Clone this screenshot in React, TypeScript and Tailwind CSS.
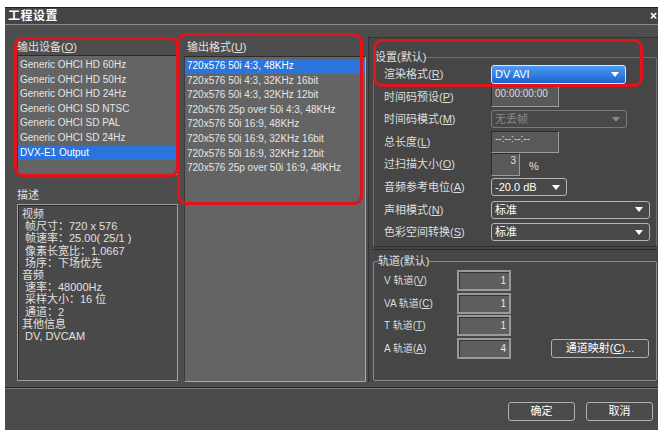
import React from "react";

const font = "font-['Liberation_Sans','Noto_Sans_CJK_SC',sans-serif]";

const devices = [
  "Generic OHCI HD 60Hz",
  "Generic OHCI HD 50Hz",
  "Generic OHCI HD 24Hz",
  "Generic OHCI SD NTSC",
  "Generic OHCI SD PAL",
  "Generic OHCI SD 24Hz",
  "DVX-E1 Output",
];

const formats = [
  "720x576 50i 4:3, 48KHz",
  "720x576 50i 4:3, 32KHz 16bit",
  "720x576 50i 4:3, 32KHz 12bit",
  "720x576 25p over 50i 4:3, 48KHz",
  "720x576 50i 16:9, 48KHz",
  "720x576 50i 16:9, 32KHz 16bit",
  "720x576 50i 16:9, 32KHz 12bit",
  "720x576 25p over 50i 16:9, 48KHz",
];

const description: Array<[string, boolean]> = [
  ["视频", false],
  ["帧尺寸：720 x 576", true],
  ["帧速率：25.00( 25/1 )", true],
  ["像素长宽比：1.0667", true],
  ["场序：下场优先", true],
  ["音频", false],
  ["速率：48000Hz", true],
  ["采样大小：16 位", true],
  ["通道：2", true],
  ["其他信息", false],
  ["DV, DVCAM", true],
];

function Label({ text, mnemonic, suffix = "" }: { text: string; mnemonic: string; suffix?: string }) {
  return (
    <span>
      {text}(<u>{mnemonic}</u>){suffix}
    </span>
  );
}

function Caret({ color = "text-white" }: { color?: string }) {
  return (
    <svg width="8" height="5" viewBox="0 0 8 5" className={color}>
      <path d="M0 0 H8 L4 5 Z" fill="currentColor" />
    </svg>
  );
}

function ListBox({
  items,
  selected,
  className,
}: {
  items: string[];
  selected: number;
  className: string;
}) {
  return (
    <div
      className={`bg-[#646464] border border-t-[#2b2b2b] border-l-[#3c3c3c] border-r-[#a8a8a8] border-b-[#a8a8a8] pt-[2px] ${className}`}
    >
      {items.map((item, i) => (
        <div
          key={item}
          className={`h-[14.6px] leading-[14.6px] pl-[2px] text-[10px] whitespace-nowrap ${
            i === selected ? "bg-[#2a74dc] text-white" : "text-[#e4e4e4]"
          }`}
        >
          {item}
        </div>
      ))}
    </div>
  );
}

function Dropdown({
  value,
  width,
  disabled = false,
}: {
  value: string;
  width: string;
  disabled?: boolean;
}) {
  return (
    <div
      className={`${width} shrink-0 h-[18px] flex items-center justify-between pl-[3px] pr-[6px] rounded-[3px] border bg-[#484848] ${
        disabled ? "border-[#7a7a7a] text-[#8a8a8a]" : "border-[#b4b4b4] text-white"
      }`}
    >
      <span className="text-[11px]">{value}</span>
      <Caret color={disabled ? "text-[#8a8a8a]" : "text-white"} />
    </div>
  );
}

function Sunken({ value, width, height, align = "left" }: { value: string; width: string; height: string; align?: "left" | "right" }) {
  return (
    <div
      className={`${width} ${height} shrink-0 bg-[#595959] border border-t-[#2a2a2a] border-l-[#2a2a2a] border-r-[#9c9c9c] border-b-[#9c9c9c] px-[3px] pt-[1px] text-[10px] leading-[12px] text-[#dcdcdc] ${
        align === "right" ? "text-right" : ""
      }`}
    >
      {value}
    </div>
  );
}

function TrackInput({ value }: { value: string }) {
  return (
    <div className="w-[54px] h-[21px] shrink-0 bg-[#5e5e5e] border-2 border-[#9a9a9a] shadow-[inset_1px_1px_0_#333] flex items-center justify-end pr-[3px] text-[10px] text-[#e8e8e8]">
      {value}
    </div>
  );
}

function Row({ label, children }: { label: React.ReactNode; children: React.ReactNode }) {
  return (
    <div className="flex items-center h-[22.6px]">
      <div className="w-[117px] shrink-0 pl-[10px] text-[11px] text-[#dedede]">{label}</div>
      {children}
    </div>
  );
}

function TrackRow({ label, value, children }: { label: React.ReactNode; value: string; children?: React.ReactNode }) {
  return (
    <div className="flex items-center h-[22.7px]">
      <div className="w-[83px] shrink-0 pl-[10px] text-[10px] text-[#dedede]">{label}</div>
      <TrackInput value={value} />
      {children}
    </div>
  );
}

function Button({ label }: { label: string }) {
  return (
    <div className="w-[67px] h-[19px] flex items-center justify-center rounded-[3px] border border-[#b0b0b0] bg-[#4a4a4a] text-[11px] text-white">
      {label}
    </div>
  );
}

export default function App() {
  return (
    <div className={`relative w-[658px] h-[430px] overflow-hidden bg-white pt-[7px] pl-[5px] ${font}`}>
      <div className="w-[653px] h-[425px] flex flex-col bg-[#4b4b4b] border-t border-[#222]">
        {/* title bar */}
        <div className="h-[17px] flex items-center justify-between bg-[#444] pl-[3px] pr-[1px] border-b border-[#8c8c8c]">
          <span className="text-[12px] font-bold text-white tracking-[0.5px]">工程设置</span>
          <span className="text-[12px] font-bold text-white leading-none">×</span>
        </div>

        {/* content */}
        <div className="h-[363px] flex bg-[#4d4d4d] border-b border-[#262626]">
          {/* left column */}
          <div className="w-[161px] ml-[12px] pt-[15px] flex flex-col">
            <div className="h-[15px] text-[11px] leading-[14px] text-[#e0e0e0]">
              <Label text="输出设备" mnemonic="O" />
            </div>
            <ListBox items={devices} selected={6} className="h-[120px]" />
            <div className="h-[14px] mt-[13px] text-[11px] leading-[14px] text-[#e0e0e0]">描述</div>
            <div className="h-[177px] mt-[2px] bg-[#494949] border border-[#a0a0a0] shadow-[inset_1px_1px_0_#2a2a2a] pl-[4px] pt-[3px]">
              {description.map(([line, indent]) => (
                <div
                  key={line}
                  className={`h-[12.2px] leading-[12.2px] text-[11px] text-[#e0e0e0] whitespace-nowrap ${indent ? "pl-[3px] text-[10.5px]" : ""}`}
                >
                  {line}
                </div>
              ))}
            </div>
          </div>

          {/* middle column */}
          <div className="w-[182px] ml-[6px] pt-[15px] flex flex-col">
            <div className="h-[16px] pl-[3px] text-[11px] leading-[14px] text-[#e0e0e0]">
              <Label text="输出格式" mnemonic="U" />
            </div>
            <ListBox items={formats} selected={0} className="h-[326px]" />
          </div>

          {/* right panel */}
          <div className="flex-1 ml-[2px] mt-[12px] mb-[5px] bg-[#464646] border-l border-t border-[#333] pl-[4px] pr-[1px] flex flex-col">
            <fieldset className="border border-[#6e6e6e] border-b-[#2e2e2e] mt-[12px] h-[197px] rounded-[2px] min-w-0">
              <legend className="ml-[1px] text-[11px] leading-[14px] text-[#e0e0e0]">设置(默认)</legend>
              <div className="mt-[-1px]">
                <Row label={<Label text="渲染格式" mnemonic="R" />}>
                  <div className="w-[135px] shrink-0 h-[19px] flex items-center justify-between pl-[3px] pr-[6px] rounded-[3px] border border-[#d8e6ff] bg-gradient-to-b from-[#4b9cf4] to-[#1b62cf] text-[11px] text-white">
                    <span>DV AVI</span>
                    <Caret />
                  </div>
                </Row>
                <Row label={<Label text="时间码预设" mnemonic="P" />}>
                  <Sunken value="00:00:00:00" width="w-[68px]" height="h-[21px]" />
                </Row>
                <Row label={<Label text="时间码模式" mnemonic="M" />}>
                  <Dropdown value="无丢帧" width="w-[136px]" disabled />
                </Row>
                <Row label={<Label text="总长度" mnemonic="L" />}>
                  <Sunken value="--:--:--:--" width="w-[68px]" height="h-[22px]" />
                </Row>
                <Row label={<Label text="过扫描大小" mnemonic="O" />}>
                  <Sunken value="3" width="w-[29px]" height="h-[23px]" align="right" />
                  <span className="ml-[9px] mt-[4px] text-[11px] text-[#e0e0e0]">%</span>
                </Row>
                <Row label={<Label text="音频参考电位" mnemonic="A" />}>
                  <Dropdown value="-20.0 dB" width="w-[76px]" />
                </Row>
                <Row label={<Label text="声相模式" mnemonic="N" />}>
                  <Dropdown value="标准" width="w-[159px]" />
                </Row>
                <Row label={<Label text="色彩空间转换" mnemonic="S" />}>
                  <Dropdown value="标准" width="w-[159px]" />
                </Row>
              </div>
            </fieldset>

            <div className="mt-[2px] border-t border-[#2a2a2a] h-px bg-[#5a5a5a]" />

            <fieldset className="border border-[#8a8a8a] mt-[4px] h-[127px] rounded-[2px] min-w-0">
              <legend className="ml-[4px] text-[11px] leading-[14px] text-[#e0e0e0]">轨道(默认)</legend>
              <div className="mt-[1px]">
                <TrackRow label={<Label text="V 轨道" mnemonic="V" />} value="1" />
                <TrackRow label={<Label text="VA 轨道" mnemonic="C" />} value="1" />
                <TrackRow label={<Label text="T 轨道" mnemonic="T" />} value="1" />
                <TrackRow label={<Label text="A 轨道" mnemonic="A" />} value="4">
                  <div className="ml-[40px] w-[98px] shrink-0 h-[19px] flex items-center justify-center rounded-[3px] border border-[#b0b0b0] bg-[#4a4a4a] text-[11px] text-white">
                    <Label text="通道映射" mnemonic="C" suffix="..." />
                  </div>
                </TrackRow>
              </div>
            </fieldset>
          </div>
        </div>

        {/* footer */}
        <div className="flex-1 flex items-start justify-end gap-[11px] pt-[13px] pr-[5px] bg-[#4a4a4a] border-t border-[#7a7a7a]">
          <Button label="确定" />
          <Button label="取消" />
        </div>
      </div>

      {/* annotation marks */}
      <div className="absolute left-[14px] top-[37px] w-[165px] h-[140px] border-[3px] border-[#e3131b] rounded-[9px] pointer-events-none" />
      <div className="absolute left-[177px] top-[33px] w-[186px] h-[172px] border-[3px] border-[#e3131b] rounded-[9px] pointer-events-none" />
      <div className="absolute left-[373px] top-[39px] w-[270px] h-[48px] border-[3px] border-[#e3131b] rounded-[9px] pointer-events-none" />
    </div>
  );
}
